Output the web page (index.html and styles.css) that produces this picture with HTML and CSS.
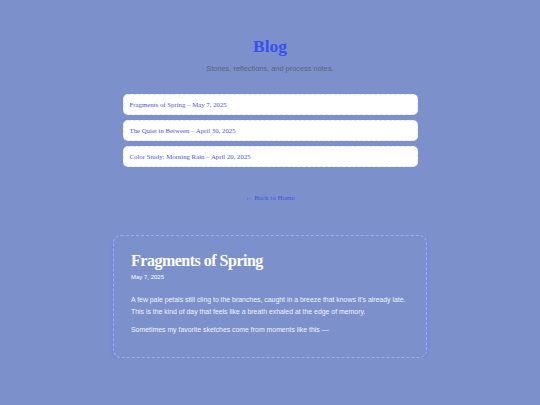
FILE: index.html
```html
<!DOCTYPE html>
<html>
<head>
<meta charset="utf-8">
<link rel="stylesheet" href="styles.css">
</head>
<body>
<main class="page">
  <header class="head">
    <h1 class="title">Blog</h1>
    <p class="subtitle">Stories, reflections, and process notes.</p>
  </header>
  <ul class="posts">
    <li class="post"><a href="#">Fragments of Spring – May 7, 2025</a></li>
    <li class="post"><a href="#">The Quiet in Between – April 30, 2025</a></li>
    <li class="post"><a href="#">Color Study: Morning Rain – April 20, 2025</a></li>
  </ul>
  <a class="back" href="#">← Back to Home</a>
  <article class="card">
    <h2 class="card-title">Fragments of Spring</h2>
    <p class="date">May 7, 2025</p>
    <p class="text">A few pale petals still cling to the branches, caught in a breeze that knows it's already late. This is the kind of day that feels like a breath exhaled at the edge of memory.</p>
    <p class="text">Sometimes my favorite sketches come from moments like this —</p>
  </article>
</main>
</body>
</html>
```
FILE: styles.css
```css
html, body {
  margin: 0;
  padding: 0;
  background: #7c91cc;
}
.page {
  display: flex;
  flex-direction: column;
  align-items: center;
  padding-top: 35px;
  font-family: "Liberation Serif", serif;
}
.head {
  text-align: center;
}
.title {
  margin: 0;
  font-size: 17.5px;
  line-height: 22px;
  font-weight: bold;
  color: #3a50ee;
}
.subtitle {
  margin: 7px 0 0;
  font-family: "Liberation Sans", sans-serif;
  font-size: 7.4px;
  line-height: 10px;
  color: #5b6176;
}
.posts {
  list-style: none;
  margin: 20px 0 0;
  padding: 0;
  width: 295px;
  display: flex;
  flex-direction: column;
  gap: 5px;
}
.post {
  background: #fff;
  border: 1.5px dashed #e6e8f6;
  border-radius: 5px;
  height: 21px;
  box-sizing: border-box;
  display: flex;
  align-items: center;
  padding-left: 6px;
}
.post a {
  font-size: 6.8px;
  color: #4d56d8;
  text-decoration: none;
}
.back {
  margin-top: 26px;
  font-size: 7px;
  line-height: 10px;
  color: #3e55e6;
  text-decoration: none;
}
.card {
  margin-top: 32px;
  width: 314px;
  height: 123px;
  box-sizing: border-box;
  border: 1px dashed #a9a9f0;
  border-radius: 8px;
  box-shadow: 0 3px 4px #6b80f0;
  padding: 14px 17px;
  color: #fff;
}
.card-title {
  margin: 0;
  font-size: 16px;
  line-height: 22px;
  font-weight: bold;
  letter-spacing: -0.5px;
}
.date {
  margin: 1px 0 0;
  font-family: "Liberation Sans", sans-serif;
  font-size: 6px;
  line-height: 9px;
}
.text {
  margin: 12px 0 0;
  font-family: "Liberation Sans", sans-serif;
  font-size: 6.9px;
  line-height: 12px;
  color: #f2f3fb;
}
.text + .text {
  margin-top: 6px;
}
```
